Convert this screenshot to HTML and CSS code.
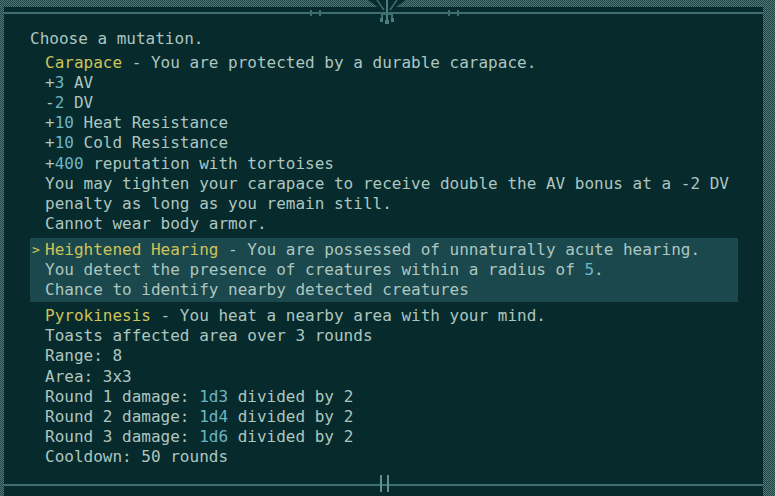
FILE: index.html
```html
<!DOCTYPE html>
<html>
<head>
<meta charset="utf-8">
<link rel="stylesheet" href="styles.css">
</head>
<body>
<div class="frame">
  <div class="rule-top">
    <span class="tick t1"></span><span class="tick t2"></span>
    <span class="tick t3"></span><span class="tick t4"></span>
  </div>
  <div class="content">
    <div class="line">Choose a mutation.</div>
    <div class="opts">
      <div class="opt">
        <div class="line"><span class="name">Carapace</span> - You are protected by a durable carapace.</div>
        <div class="line">+<span class="num">3</span> AV</div>
        <div class="line">-<span class="num">2</span> DV</div>
        <div class="line">+<span class="num">10</span> Heat Resistance</div>
        <div class="line">+<span class="num">10</span> Cold Resistance</div>
        <div class="line">+<span class="num">400</span> reputation with tortoises</div>
        <div class="line">You may tighten your carapace to receive double the AV bonus at a -2 DV</div>
        <div class="line">penalty as long as you remain still.</div>
        <div class="line">Cannot wear body armor.</div>
      </div>
      <div class="opt selected">
        <span class="caret">&gt;</span>
        <div class="line"><span class="name">Heightened Hearing</span> - You are possessed of unnaturally acute hearing.</div>
        <div class="line">You detect the presence of creatures within a radius of <span class="num">5</span>.</div>
        <div class="line">Chance to identify nearby detected creatures</div>
      </div>
      <div class="opt">
        <div class="line"><span class="name">Pyrokinesis</span> - You heat a nearby area with your mind.</div>
        <div class="line">Toasts affected area over 3 rounds</div>
        <div class="line">Range: 8</div>
        <div class="line">Area: 3x3</div>
        <div class="line">Round 1 damage: <span class="num">1d3</span> divided by 2</div>
        <div class="line">Round 2 damage: <span class="num">1d4</span> divided by 2</div>
        <div class="line">Round 3 damage: <span class="num">1d6</span> divided by 2</div>
        <div class="line">Cooldown: 50 rounds</div>
      </div>
    </div>
  </div>
  <div class="rule-bottom"></div>
  <svg class="crest" width="50" height="26" viewBox="0 0 50 26">
    <polygon points="2,0 40,0 27,9 15,9" fill="#072a2c"/>
    <line x1="11" y1="0" x2="18" y2="10" stroke="#3e6e72" stroke-width="1.5"/>
    <line x1="31" y1="0" x2="24" y2="10" stroke="#3e6e72" stroke-width="1.5"/>
    <rect x="20" y="0" width="2" height="23" fill="#4a7c80"/>
    <rect x="15" y="12" width="12" height="3" fill="#3e6e72"/>
    <rect x="15" y="15" width="2" height="4" fill="#3e6e72"/>
    <rect x="25" y="15" width="2" height="4" fill="#3e6e72"/>
    <rect x="14" y="18" width="3" height="4" fill="#4a7c80"/>
    <rect x="25" y="18" width="3" height="4" fill="#4a7c80"/>
    <rect x="19" y="20" width="4" height="4" fill="#4a7c80"/>
  </svg>
  <div class="bars"><span></span><span></span></div>
</div>
</body>
</html>
```

FILE: styles.css
```css
html, body {
  margin: 0;
  padding: 0;
}
body {
  width: 775px;
  height: 496px;
  overflow: hidden;
  background: repeating-conic-gradient(#4f7876 0 25%, #1e4345 0 50%) 0 0 / 2px 2px;
  font-family: "DejaVu Sans Mono", "Liberation Mono", monospace;
  font-size: 16px;
  color: #adc6c0;
}
.frame {
  position: relative;
  margin: 7px 12px 0 4px;
  height: 489px;
  background: #072a2c;
  display: flex;
  flex-direction: column;
}
.rule-top {
  position: relative;
  margin-top: 5px;
  height: 2px;
  background: #3e6e72;
}
.tick {
  position: absolute;
  top: -2px;
  width: 2px;
  height: 6px;
  background: #3e6e72;
}
.t1 { left: 306px; }
.t2 { left: 315px; }
.t3 { left: 444px; }
.t4 { left: 453px; }
.content {
  flex: 1;
  padding: 15px 25px 0 26px;
}
.line {
  height: 20.1px;
  line-height: 20.1px;
  white-space: pre;
}
.opts {
  margin-top: 2px;
  display: flex;
  flex-direction: column;
  gap: 2px;
}
.opt {
  position: relative;
  padding: 2px 0 2px 15px;
}
.opt.selected {
  background: #1b484c;
}
.caret {
  position: absolute;
  left: 2px;
  top: 2px;
  line-height: 20px;
  font-size: 13px;
  color: #cfc35a;
}
.name {
  color: #cfc35a;
}
.num {
  color: #6db6c4;
}
.rule-bottom {
  height: 2px;
  margin-bottom: 10px;
  background: #3e6e72;
}
.crest {
  position: absolute;
  left: 362px;
  top: -7px;
}
.bars {
  position: absolute;
  left: 376px;
  bottom: 4px;
  display: flex;
  gap: 5px;
}
.bars span {
  width: 2px;
  height: 17px;
  background: #5f9294;
}
```
